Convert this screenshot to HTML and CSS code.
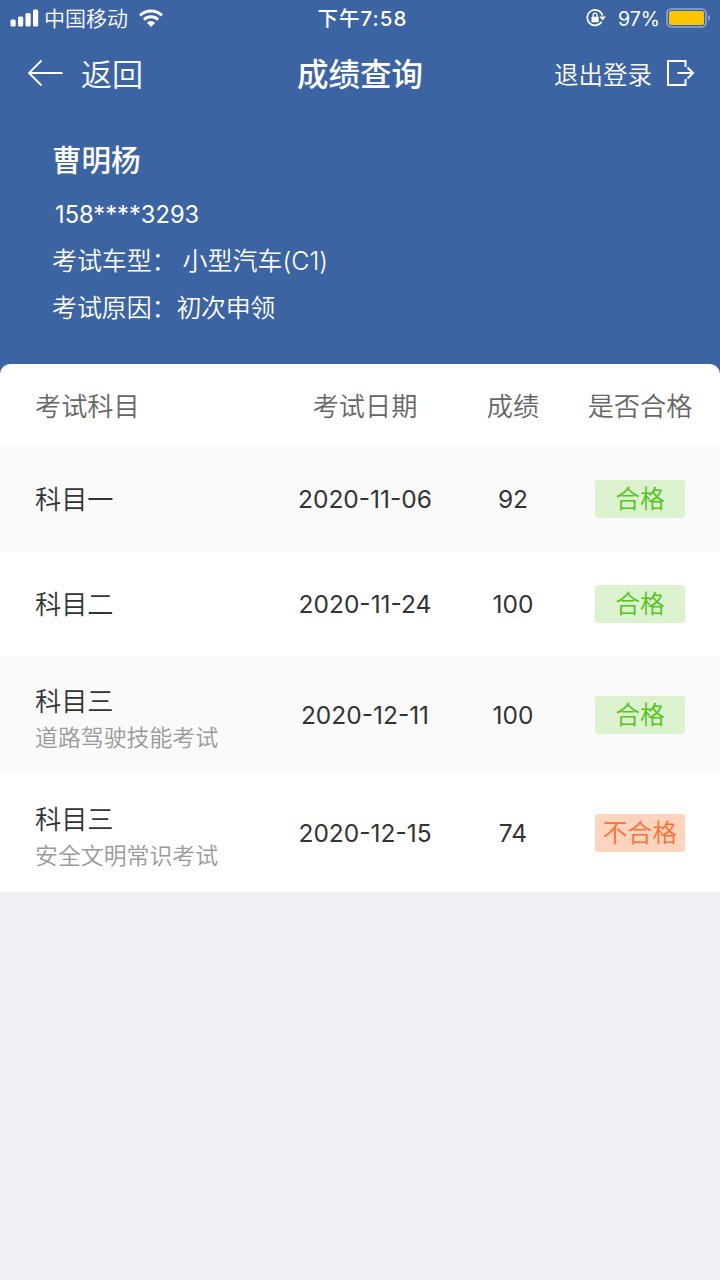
FILE: index.html
```html
<!DOCTYPE html>
<html lang="zh-CN">
<head>
  <meta charset="UTF-8">
  <title>成绩查询</title>
  <link rel="stylesheet" href="styles.css">
</head>
<body>
  <header class="top">
    <div class="status-bar">
      <div class="status-left">
        <svg class="signal" width="29" height="18" viewBox="0 0 29 18" fill="#fff">
          <rect x="0.500" y="10.500" width="5.200" height="7" rx="1.500"/>
          <rect x="8" y="7.500" width="5.200" height="10" rx="1.500"/>
          <rect x="15.500" y="4" width="5.200" height="13.500" rx="1.500"/>
          <rect x="23" y="0.500" width="5.200" height="17" rx="1.500"/>
        </svg>
        <span class="carrier">中国移动</span>
        <svg class="wifi" width="26" height="19" viewBox="0 0 26 19">
          <path d="M2 6.500a15.600 15.600 0 0 1 22 0M6 10.700a9.900 9.900 0 0 1 14 0" fill="none" stroke="#fff" stroke-width="2.900"/>
          <path d="M8.900 13.800a5.800 5.800 0 0 1 8.200 0L13 18z" fill="#fff"/>
        </svg>
      </div>
      <div class="clock">下午7:58</div>
      <div class="status-right">
        <svg class="lock" width="20" height="20" viewBox="0 0 20 20">
          <path d="M15.700 13.800A7.800 7.800 0 1 1 16.600 7.500" fill="none" stroke="#fff" stroke-width="1.700"/>
          <path d="M13.400 8.500h6.400l-3.200 4z" fill="#fff"/>
          <rect x="5.500" y="8.700" width="7.200" height="5.600" rx="0.800" fill="#fff"/>
          <path d="M7.100 9V7.200a2 2 0 0 1 4 0V9" fill="none" stroke="#fff" stroke-width="1.300"/>
        </svg>
        <span class="percent">97%</span>
        <svg class="battery" width="45" height="20" viewBox="0 0 45 20">
          <rect x="1" y="1" width="39" height="18" rx="4.500" fill="none" stroke="#8ba9d8" stroke-width="1.600"/>
          <rect x="3" y="3" width="35" height="14" rx="2" fill="#fdc500"/>
          <path d="M42 7a3.200 3.200 0 0 1 0 6z" fill="#8ba9d8"/>
        </svg>
      </div>
    </div>

    <nav class="nav">
      <div class="back">
        <svg width="36" height="28" viewBox="0 0 36 28" fill="none" stroke="#fff" stroke-width="1.800">
          <path d="M35.500 14H2M14.500 1.500L2 14L14.500 26.500"/>
        </svg>
        <span>返回</span>
      </div>
      <h1 class="title">成绩查询</h1>
      <div class="logout">
        <span>退出登录</span>
        <svg width="29" height="28" viewBox="0 0 29 28" fill="none" stroke="#fff" stroke-width="2">
          <path d="M19.500 8V2H2v24h17.500v-6M11.500 14H27M21.500 8.500L27 14l-5.500 5.500"/>
        </svg>
      </div>
    </nav>

    <div class="profile">
      <h2 class="name">曹明杨</h2>
      <p class="phone">158****3293</p>
      <p><span class="label">考试车型：</span><span class="car">小型汽车(C1)</span></p>
      <p><span class="label">考试原因：</span><span class="reason">初次申领</span></p>
    </div>
  </header>

  <main class="scores">
    <div class="row head">
      <div class="subject">考试科目</div>
      <div>考试日期</div>
      <div>成绩</div>
      <div>是否合格</div>
    </div>
    <div class="row gray">
      <div class="subject">科目一</div>
      <div class="num">2020-11-06</div>
      <div class="num">92</div>
      <div><span class="tag pass">合格</span></div>
    </div>
    <div class="row">
      <div class="subject">科目二</div>
      <div class="num">2020-11-24</div>
      <div class="num">100</div>
      <div><span class="tag pass">合格</span></div>
    </div>
    <div class="row tall gray">
      <div class="subject">科目三<small>道路驾驶技能考试</small></div>
      <div class="num">2020-12-11</div>
      <div class="num">100</div>
      <div><span class="tag pass">合格</span></div>
    </div>
    <div class="row tall last">
      <div class="subject">科目三<small>安全文明常识考试</small></div>
      <div class="num">2020-12-15</div>
      <div class="num">74</div>
      <div><span class="tag fail">不合格</span></div>
    </div>
  </main>
</body>
</html>
```

FILE: styles.css
```css
* {
  box-sizing: border-box;
}

body {
  margin: 0;
  min-height: 100vh;
  background: #efeff4;
  font-family: Inter, "Noto Sans CJK SC", sans-serif;
  font-weight: 350;
  color: #333;
}

h1, h2, p {
  margin: 0;
}

svg {
  display: block;
  flex: none;
}

.top {
  height: 380px;
  background: #3c64a2;
  color: #fff;
}

.status-bar {
  display: grid;
  grid-template-columns: 1fr auto 1fr;
  align-items: center;
  height: 36px;
  padding: 0 9px 0 10px;
  font-size: 20px;
  line-height: 38px;
}

.status-bar svg {
  margin-bottom: 2px;
}

.status-left, .status-right {
  display: flex;
  align-items: center;
}

.status-right {
  justify-content: flex-end;
}

.carrier {
  margin: 0 10px 0 5px;
  font-size: 21px;
}

.clock {
  padding-left: 4px;
  font-size: 20.5px;
  font-weight: 500;
  letter-spacing: 1px;
}

.percent {
  margin: 0 6px 0 12px;
  font-size: 19.5px;
  font-weight: 400;
}

.nav {
  display: grid;
  grid-template-columns: 1fr auto 1fr;
  align-items: center;
  height: 74px;
  padding: 0 25px 0 27px;
  line-height: 42px;
}

.back, .logout {
  display: flex;
  align-items: center;
}

.back {
  gap: 18px;
  font-size: 31px;
}

.back span, .title {
  padding-top: 3px;
}

.title {
  padding-right: 2px;
  font-size: 31.5px;
  font-weight: 500;
}

.logout {
  justify-content: flex-end;
  gap: 14px;
  font-size: 24.5px;
}

.logout span {
  padding-top: 3px;
}

.profile {
  padding: 26px 52px 0;
  font-size: 25px;
  line-height: 47px;
}

.name {
  height: 55px;
  font-size: 29.5px;
  font-weight: 500;
  line-height: 48px;
}

.phone {
  padding-left: 3px;
  font-size: 23.7px;
  font-weight: 400;
}

.label {
  letter-spacing: -0.1px;
}

.car {
  margin-left: 6px;
}

.reason {
  letter-spacing: -0.4px;
}

.scores {
  position: relative;
  margin-top: -16px;
  background: #fff;
  border-radius: 10px 10px 0 0;
}

.row {
  display: grid;
  grid-template-columns: 255px 150px 146px 108px;
  align-items: center;
  height: 104px;
  padding-left: 35px;
  font-size: 24.5px;
  line-height: 37px;
  text-align: center;
}

.head {
  height: 82px;
  padding-top: 3px;
  color: #666;
  font-size: 26.2px;
  line-height: 40px;
}

.gray {
  height: 106px;
  background: #fafafa;
}

.num {
  font-weight: 400;
}

.tall {
  height: 117px;
}

.last {
  height: 119px;
}

.subject {
  font-size: 26.2px;
  text-align: left;
}

.tall .subject {
  padding-top: 10px;
}

.tall .num {
  padding-top: 2px;
}

.subject small {
  display: block;
  color: #999;
  font-size: 22.9px;
}

.tag {
  display: block;
  width: 90px;
  height: 38px;
  margin: 0 auto;
  border-radius: 3px;
  font-size: 24.8px;
  line-height: 39px;
}

.pass {
  background: #dcf2cf;
  color: #52c41a;
}

.fail {
  background: #ffd4bf;
  color: #fa7035;
}
```
